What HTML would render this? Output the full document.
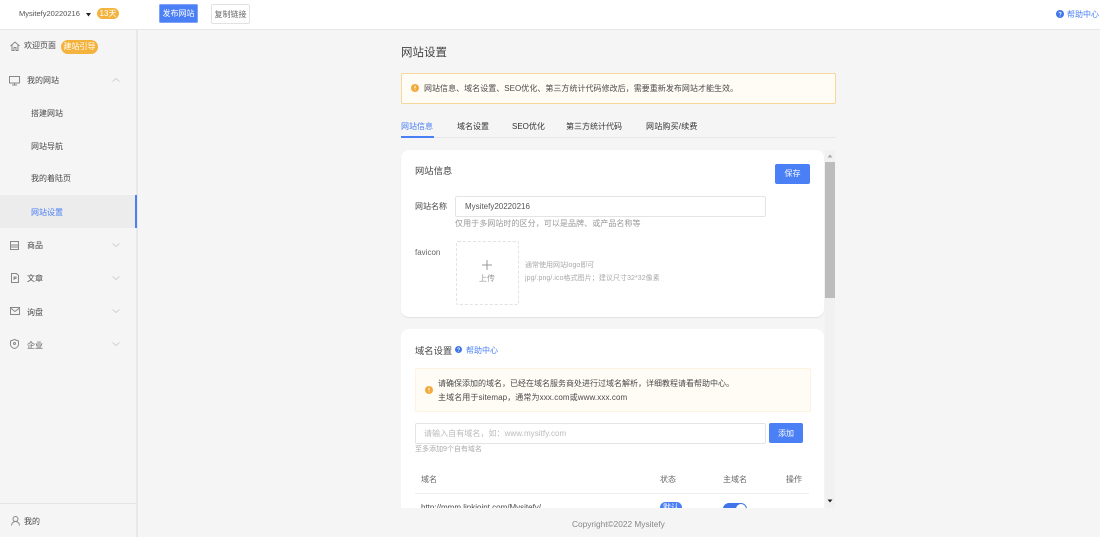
<!DOCTYPE html>
<html lang="zh"><head><meta charset="utf-8"><title>网站设置</title>
<style>
html,body{margin:0;padding:0;width:1100px;height:537px;overflow:hidden;background:#f5f5f5}
body{position:relative;font-family:"Liberation Sans","Noto Sans CJK SC",sans-serif;font-size:8px;color:#4a4a4a}
#w{position:absolute;left:0;top:0;width:1100px;height:537px;filter:blur(.25px)}
.a{position:absolute;white-space:nowrap}
.t{position:absolute;white-space:nowrap;line-height:12px;height:12px}
svg{position:absolute;overflow:visible}
.ic{fill:none;stroke:#888;stroke-width:1}
.b{background:#4a7ff5;color:#fff;border-radius:2px;text-align:center}
</style></head><body><div id="w">

<!-- header -->
<div class="a" style="left:0;top:0;width:1100px;height:29px;background:#fff;border-bottom:1px solid #e6e6e6"></div>
<div class="t" style="left:19px;top:8px;color:#555;font-size:7.5px">Mysitefy20220216</div>
<svg style="left:85px;top:13px" width="7" height="4"><path d="M1 0H6L3.500 3.500Z" fill="#222"/></svg>
<div class="a" style="left:97px;top:8px;width:22px;height:11px;line-height:11px;border-radius:6px;background:#f3b33d;color:#fff;text-align:center;font-size:8px">13天</div>
<div class="a b" style="left:159px;top:4px;width:39px;height:19px;line-height:20px;font-size:8px;outline:1px solid #7ea3f7;outline-offset:-1px">发布网站</div>
<div class="a" style="left:211px;top:4px;width:37px;height:18px;line-height:19px;text-align:center;background:#fff;border:1px solid #e2e2e2;border-radius:2px;color:#666">复制链接</div>
<svg style="left:1056px;top:10px" width="8" height="8"><circle cx="4" cy="4" r="4" fill="#3f75e8"/><path d="M2.900 3.200a1.100 1.100 0 1 1 1.600 1L4 4.800" stroke="#fff" stroke-width=".8" fill="none"/><circle cx="4" cy="6" r=".5" fill="#fff"/></svg>
<div class="t" style="left:1067px;top:9px;color:#4a7ff5">帮助中心</div>

<!-- sidebar -->
<div class="a" style="left:0;top:30px;width:136px;height:507px;background:#f5f5f5;border-right:2px solid #e8e8e8"></div>
<div class="a" style="left:0;top:195px;width:135px;height:33px;background:#ececec"></div>
<div class="a" style="left:135px;top:195px;width:2px;height:33px;background:#4a7ff5"></div>
<div class="a" style="left:0;top:503px;width:136px;height:1px;background:#e4e4e4"></div>

<svg class="ic" style="left:10px;top:41px" width="10" height="10"><path d="M.5 5L5 1L9.500 5M2 4V9.500H4V6.500H6V9.500H8V4"/></svg>
<div class="t" style="left:24px;top:40px">欢迎页面</div>
<div class="a" style="left:61px;top:40px;width:37px;height:14px;line-height:14px;border-radius:7px;background:#f3b33d;color:#fff;text-align:center">建站引导</div>

<svg class="ic" style="left:9px;top:76px" width="11" height="10"><rect x=".5" y=".5" width="10" height="6.500"/><path d="M3 9H8M5.500 7V9"/></svg>
<div class="t" style="left:27px;top:75px">我的网站</div>
<svg style="left:112px;top:78px" width="8" height="4"><path d="M.5 3.500L4 .5L7.500 3.500" fill="none" stroke="#d2d2d2"/></svg>
<div class="t" style="left:31px;top:108px">搭建网站</div>
<div class="t" style="left:31px;top:141px">网站导航</div>
<div class="t" style="left:31px;top:173px">我的着陆页</div>
<div class="t" style="left:31px;top:207px;color:#4a7ff5">网站设置</div>

<svg class="ic" style="left:10px;top:241px" width="9" height="9"><rect x=".5" y=".5" width="8" height="8"/><path d="M.5 4H8.500M.5 6H8.500"/></svg>
<div class="t" style="left:27px;top:240px">商品</div>
<svg style="left:112px;top:243px" width="8" height="4"><path d="M.5 .5L4 3.500L7.500 .5" fill="none" stroke="#d2d2d2"/></svg>

<svg class="ic" style="left:11px;top:273px" width="8" height="10"><path d="M.5 .5H5.500L7.500 2.500V9.500H.5ZM3 7V4H5V5.500H3"/></svg>
<div class="t" style="left:27px;top:273px">文章</div>
<svg style="left:112px;top:276px" width="8" height="4"><path d="M.5 .5L4 3.500L7.500 .5" fill="none" stroke="#d2d2d2"/></svg>

<svg class="ic" style="left:10px;top:307px" width="10" height="8"><rect x=".5" y=".5" width="9" height="7"/><path d="M.5 1L5 4.500L9.500 1"/></svg>
<div class="t" style="left:27px;top:307px">询盘</div>
<svg style="left:112px;top:309px" width="8" height="4"><path d="M.5 .5L4 3.500L7.500 .5" fill="none" stroke="#d2d2d2"/></svg>

<svg class="ic" style="left:10px;top:339px" width="9" height="10"><path d="M4.500 .5L8.500 2V5.500C8.500 7.500 6.500 9 4.500 9.500C2.500 9 .5 7.500 .5 5.500V2Z"/><circle cx="4.500" cy="4.500" r="1"/></svg>
<div class="t" style="left:27px;top:340px">企业</div>
<svg style="left:112px;top:342px" width="8" height="4"><path d="M.5 .5L4 3.500L7.500 .5" fill="none" stroke="#d2d2d2"/></svg>

<svg class="ic" style="left:11px;top:516px" width="9" height="10"><circle cx="4.500" cy="3" r="2.500"/><path d="M.5 9.500C.5 7 2.500 5.500 4.500 5.500S8.500 7 8.500 9.500"/></svg>
<div class="t" style="left:24px;top:516px">我的</div>

<!-- main -->
<div class="t" style="left:401px;top:46px;font-size:11.500px;line-height:14px;height:14px;color:#444">网站设置</div>

<div class="a" style="left:401px;top:73px;width:433px;height:29px;background:#fffcf5;border:1px solid #f5d89a;border-radius:2px"></div>
<svg style="left:411px;top:84px" width="8" height="8"><circle cx="4" cy="4" r="4" fill="#f3a93b"/><path d="M4 1.800V4.400" stroke="#fff"/><circle cx="4" cy="5.900" r=".5" fill="#fff"/></svg>
<div class="t" style="left:424px;top:83px;letter-spacing:.03px">网站信息、域名设置、SEO优化、第三方统计代码修改后，需要重新发布网站才能生效。</div>

<div class="a" style="left:401px;top:137px;width:435px;height:1px;background:#e8e8e8"></div>
<div class="a" style="left:401px;top:136px;width:33px;height:2px;background:#4a7ff5"></div>
<div class="t" style="left:401px;top:121px;color:#4a7ff5">网站信息</div>
<div class="t" style="left:457px;top:121px;color:#333">域名设置</div>
<div class="t" style="left:512px;top:121px;color:#333">SEO优化</div>
<div class="t" style="left:566px;top:121px;color:#333">第三方统计代码</div>
<div class="t" style="left:646px;top:121px;color:#333;letter-spacing:.2px">网站购买/续费</div>

<!-- scroll area -->
<div class="a" style="left:825px;top:150px;width:10px;height:358px;background:#f1f1f1"></div>
<div class="a" style="left:825px;top:162px;width:10px;height:136px;background:#bcbcbc"></div>
<svg style="left:827px;top:154px" width="6" height="4"><path d="M3 .5L5.500 3.500H.5Z" fill="#aaa"/></svg>
<svg style="left:827px;top:499px" width="6" height="4"><path d="M.5 .5H5.500L3 3.500Z" fill="#222"/></svg>

<!-- card 1 -->
<div class="a" style="left:401px;top:150px;width:423px;height:167px;background:#fff;border-radius:8px;box-shadow:0 1px 1px #e2e2e2"></div>
<div class="t" style="left:415px;top:165px;font-size:9.300px;color:#444">网站信息</div>
<div class="a b" style="left:775px;top:164px;width:35px;height:20px;line-height:20px;">保存</div>
<div class="t" style="left:415px;top:201px">网站名称</div>
<div class="a" style="left:455px;top:196px;width:309px;height:19px;line-height:19px;border:1px solid #e4e4e4;border-radius:2px;background:#fff;text-indent:9px;color:#555">Mysitefy20220216</div>
<div class="t" style="left:455px;top:218px;color:#999;letter-spacing:.07px">仅用于多网站时的区分，可以是品牌、或产品名称等</div>
<div class="t" style="left:415px;top:247px;color:#666">favicon</div>
<div class="a" style="left:456px;top:241px;width:61px;height:62px;border:1px dashed #e2e2e2;border-radius:2px"></div>
<svg style="left:482px;top:260px" width="10" height="10"><path d="M5 0V10M0 5H10" stroke="#999"/></svg>
<div class="t" style="left:479px;top:273px;color:#999">上传</div>
<div class="t" style="left:525px;top:260px;color:#aaa;font-size:7px">通常使用网站logo即可</div>
<div class="t" style="left:525px;top:273px;color:#aaa;font-size:7px;letter-spacing:.06px">jpg/.png/.ico格式图片；建议尺寸32*32像素</div>

<!-- card 2 -->
<div class="a" style="left:401px;top:329px;width:423px;height:179px;background:#fff;border-radius:8px 8px 0 0;overflow:hidden">
<div class="t" style="left:14px;top:16px;font-size:9.300px;color:#444">域名设置</div>
<svg style="left:54px;top:17px" width="7" height="7"><circle cx="3.500" cy="3.500" r="3.500" fill="#3f75e8"/><path d="M2.500 2.800a1 1 0 1 1 1.400 .9L3.500 4.200" stroke="#fff" stroke-width=".7" fill="none"/><circle cx="3.500" cy="5.300" r=".45" fill="#fff"/></svg>
<div class="t" style="left:65px;top:16px;color:#4a7ff5">帮助中心</div>
<div class="a" style="left:14px;top:39px;width:394px;height:42px;background:#fffcf5;border:.5px solid #fdf3e0;border-radius:2px"></div>
<svg style="left:24px;top:57px" width="8" height="8"><circle cx="4" cy="4" r="4" fill="#f3a93b"/><path d="M4 1.800V4.400" stroke="#fff"/><circle cx="4" cy="5.900" r=".5" fill="#fff"/></svg>
<div class="t" style="left:37px;top:49px">请确保添加的域名，已经在域名服务商处进行过域名解析，详细教程请看帮助中心。</div>
<div class="t" style="left:37px;top:63px;letter-spacing:.1px">主域名用于sitemap，通常为xxx.com或www.xxx.com</div>
<div class="a" style="left:14px;top:94px;width:349px;height:19px;line-height:19px;border:1px solid #e4e4e4;border-radius:2px;text-indent:8px;color:#bbb;letter-spacing:.06px">请输入自有域名，如：www.mysitfy.com</div>
<div class="a b" style="left:368px;top:94px;width:34px;height:20px;line-height:21px">添加</div>
<div class="t" style="left:14px;top:115px;color:#aaa;font-size:7px">至多添加9个自有域名</div>
<div class="t" style="left:20px;top:145px;color:#666">域名</div>
<div class="t" style="left:259px;top:145px;color:#666">状态</div>
<div class="t" style="left:322px;top:145px;color:#666">主域名</div>
<div class="t" style="left:385px;top:145px;color:#666">操作</div>
<div class="a" style="left:14px;top:164px;width:394px;height:1px;background:#eee"></div>
<div class="t" style="left:20px;top:173px">http://mmm.linkjoint.com/Mysitefy/</div>
<div class="a b" style="left:259px;top:173px;width:22px;height:11px;line-height:11px;border-radius:6px">默认</div>
<div class="a" style="left:322px;top:174px;width:24px;height:12px;border-radius:6px;background:#3f75e8"></div>
<div class="a" style="left:335px;top:175px;width:10px;height:10px;border-radius:50%;background:#fff"></div>
</div>

<div class="t" style="left:572px;top:518px;color:#888;font-size:8.300px">Copyright©2022 Mysitefy</div>
</div></body></html>
